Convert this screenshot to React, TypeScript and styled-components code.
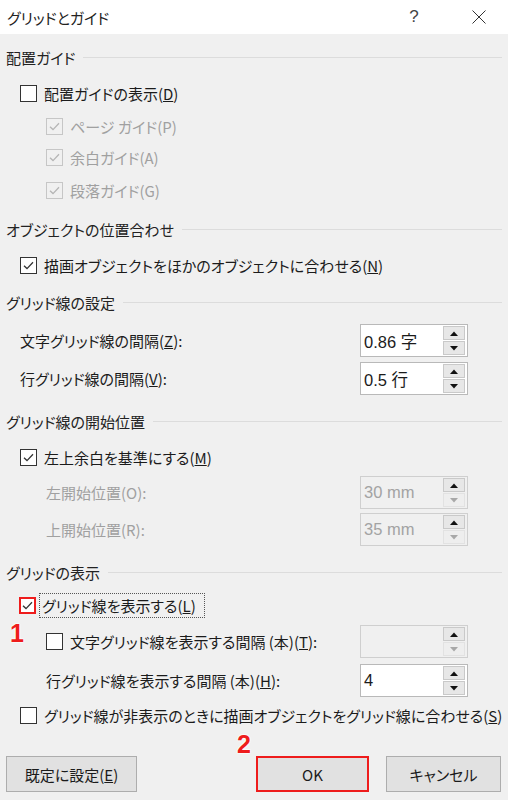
import React from "react"
import styled, { createGlobalStyle } from "styled-components"

const GlobalStyle = createGlobalStyle`
  html, body {
    margin: 0;
    padding: 0;
    background: #f0f0f0;
  }
  body {
    font-family: "Noto Sans CJK JP", "Noto Sans", sans-serif;
    font-feature-settings: "palt";
    color: #1b1b1b;
  }
`

const Dialog = styled.div`
  width: 508px;
  height: 800px;
  background: #f0f0f0;
  display: flex;
  flex-direction: column;
  position: relative;
  overflow: hidden;
`

const TitleBar = styled.div`
  height: 34px;
  background: #fff;
  display: flex;
  align-items: center;
  padding-left: 7px;
  font-size: 15px;
  color: #222;
`

const Title = styled.div`
  flex: 1;
`

const TitleBtn = styled.div<{ $w: number }>`
  width: ${p => p.$w}px;
  height: 34px;
  display: flex;
  align-items: center;
  justify-content: center;
  color: #444;
  font-size: 17px;
  font-family: "Liberation Sans", sans-serif;
`

const Row = styled.div<{ $h: number; $mt: number; $indent?: number }>`
  height: ${p => p.$h}px;
  margin-top: ${p => p.$mt}px;
  padding-left: ${p => p.$indent ?? 0}px;
  display: flex;
  align-items: center;
  font-size: 15px;
  white-space: nowrap;
`

const Header = styled(Row)`
  padding-left: 6px;
  padding-right: 6px;
  gap: 8px;
  color: #222;

  &::after {
    content: "";
    flex: 1;
    height: 1px;
    background: #dcdcdc;
  }
`

const Box = styled.span<{ $disabled?: boolean; $red?: boolean }>`
  width: 17px;
  height: 17px;
  box-sizing: border-box;
  flex: none;
  border: ${p => (p.$red ? "2px solid #ee1c1c" : `1px solid ${p.$disabled ? "#c6c6c6" : "#333"}`)};
  background: ${p => (p.$disabled ? "#f0f0f0" : "#fff")};
  display: flex;
  align-items: center;
  justify-content: center;
  margin-right: 7px;
`

const Label = styled.span<{ $disabled?: boolean }>`
  color: ${p => (p.$disabled ? "#a0a0a0" : "#1b1b1b")};
  flex: 1;
`

const Focus = styled.span`
  outline: 1px dotted #555;
  padding: 1px 8px 1px 2px;
  margin-left: -3px;
`

const Check = ({ checked, disabled, red }: { checked?: boolean; disabled?: boolean; red?: boolean }) => (
  <Box $disabled={disabled} $red={red}>
    {checked && (
      <svg width="13" height="13" viewBox="0 0 13 13">
        <path d="M2 6.8 L5 9.6 L11 3.2" fill="none" stroke={disabled ? "#b5b5b5" : "#333"} strokeWidth="1.3" />
      </svg>
    )}
  </Box>
)

const Spin = styled.div<{ $disabled?: boolean }>`
  width: 108px;
  height: 33px;
  box-sizing: border-box;
  border: 1px solid ${p => (p.$disabled ? "#cfcfcf" : "#b9b9b9")};
  background: ${p => (p.$disabled ? "#f0f0f0" : "#fff")};
  margin-right: 40px;
  display: flex;
  align-items: center;
  padding: 1px 2px 1px 3px;
`

const SpinValue = styled.span<{ $disabled?: boolean }>`
  flex: 1;
  font-family: "Liberation Sans", "Noto Sans CJK JP", sans-serif;
  font-size: 16.5px;
  color: ${p => (p.$disabled ? "#a3a3a3" : "#1b1b1b")};
`

const Arrows = styled.div`
  width: 22px;
  height: 29px;
  display: flex;
  flex-direction: column;
  gap: 1px;
`

const ArrowBtn = styled.div<{ $disabled?: boolean }>`
  flex: 1;
  box-sizing: border-box;
  border: 1px solid ${p => (p.$disabled ? "#e2e2e2" : "#c9c9c9")};
  background: ${p => (p.$disabled ? "#eeeeee" : "#e7e7e7")};
  display: flex;
  align-items: center;
  justify-content: center;
`

const Tri = ({ up, color }: { up?: boolean; color: string }) => (
  <svg width="8" height="5" viewBox="0 0 8 5">
    <path d={up ? "M0 5 L4 0.5 L8 5 Z" : "M0 0 L8 0 L4 4.5 Z"} fill={color} />
  </svg>
)

const SpinBox = ({ value, disabled }: { value: string; disabled?: boolean }) => (
  <Spin $disabled={disabled}>
    <SpinValue $disabled={disabled}>{value}</SpinValue>
    <Arrows>
      <ArrowBtn>
        <Tri up color="#111" />
      </ArrowBtn>
      <ArrowBtn $disabled={disabled}>
        <Tri color={disabled ? "#a8a8a8" : "#111"} />
      </ArrowBtn>
    </Arrows>
  </Spin>
)

const ButtonRow = styled.div`
  margin-top: 29px;
  height: 36px;
  display: flex;
  gap: 17px;
  padding: 0 7px 0 6px;
`

const Button = styled.div<{ $w: number; $red?: boolean }>`
  width: ${p => p.$w}px;
  height: 36px;
  box-sizing: border-box;
  border: ${p => (p.$red ? "2px solid #ee1c1c" : "1px solid #adadad")};
  background: #e1e1e1;
  display: flex;
  align-items: center;
  justify-content: center;
  font-size: 15px;
  color: #1b1b1b;
`

const Spacer = styled.div`
  flex: 1;
`

const Marker = styled.div<{ $x: number; $y: number }>`
  position: absolute;
  left: ${p => p.$x}px;
  top: ${p => p.$y}px;
  font-family: "Liberation Sans", sans-serif;
  font-weight: bold;
  font-size: 25px;
  line-height: 1;
  color: #ee1c1c;
  text-shadow: 0 0 2px #fff, 0 0 2px #fff, 0 0 2px #fff;
`

export default function App() {
  return (
    <Dialog>
      <GlobalStyle />
      <TitleBar>
        <Title>グリッドとガイド</Title>
        <TitleBtn $w={44}>?</TitleBtn>
        <TitleBtn $w={58} style={{ marginLeft: 14 }}>
          <svg width="16" height="16" viewBox="0 0 16 16">
            <path d="M1.5 1.5 L14.5 14.5 M14.5 1.5 L1.5 14.5" stroke="#333" strokeWidth="1" />
          </svg>
        </TitleBtn>
      </TitleBar>

      <Header $h={22} $mt={12}>配置ガイド</Header>
      <Row $h={24} $mt={13} $indent={20}>
        <Check />
        <Label>配置ガイドの表示(<u>D</u>)</Label>
      </Row>
      <Row $h={24} $mt={9} $indent={46}>
        <Check checked disabled />
        <Label $disabled>ページ ガイド(P)</Label>
      </Row>
      <Row $h={24} $mt={7} $indent={46}>
        <Check checked disabled />
        <Label $disabled>余白ガイド(A)</Label>
      </Row>
      <Row $h={24} $mt={9} $indent={46}>
        <Check checked disabled />
        <Label $disabled>段落ガイド(G)</Label>
      </Row>

      <Header $h={22} $mt={16}>オブジェクトの位置合わせ</Header>
      <Row $h={24} $mt={13} $indent={20}>
        <Check checked />
        <Label>描画オブジェクトをほかのオブジェクトに合わせる(<u>N</u>)</Label>
      </Row>

      <Header $h={22} $mt={14}>グリッド線の設定</Header>
      <Row $h={33} $mt={11} $indent={20}>
        <Label>文字グリッド線の間隔(<u>Z</u>):</Label>
        <SpinBox value="0.86 字" />
      </Row>
      <Row $h={33} $mt={5} $indent={20}>
        <Label>行グリッド線の間隔(<u>V</u>):</Label>
        <SpinBox value="0.5 行" />
      </Row>

      <Header $h={22} $mt={15}>グリッド線の開始位置</Header>
      <Row $h={24} $mt={13} $indent={20}>
        <Check checked />
        <Label>左上余白を基準にする(<u>M</u>)</Label>
      </Row>
      <Row $h={33} $mt={7} $indent={46}>
        <Label $disabled>左開始位置(O):</Label>
        <SpinBox value="30 mm" disabled />
      </Row>
      <Row $h={33} $mt={4} $indent={46}>
        <Label $disabled>上開始位置(R):</Label>
        <SpinBox value="35 mm" disabled />
      </Row>

      <Header $h={22} $mt={15}>グリッドの表示</Header>
      <Row $h={24} $mt={10} $indent={19}>
        <Check checked red />
        <Label>
          <Focus>グリッド線を表示する(<u>L</u>)</Focus>
        </Label>
      </Row>
      <Row $h={33} $mt={8} $indent={46}>
        <Check />
        <Label>文字グリッド線を表示する間隔 (本)(<u>T</u>):</Label>
        <SpinBox value="" disabled />
      </Row>
      <Row $h={33} $mt={6} $indent={46}>
        <Label>行グリッド線を表示する間隔 (本)(<u>H</u>):</Label>
        <SpinBox value="4" />
      </Row>
      <Row $h={24} $mt={6} $indent={20}>
        <Check />
        <Label>グリッド線が非表示のときに描画オブジェクトをグリッド線に合わせる(<u>S</u>)</Label>
      </Row>

      <ButtonRow>
        <Button $w={131}>既定に設定(<u>E</u>)</Button>
        <Spacer />
        <Button $w={113} $red>OK</Button>
        <Button $w={115}>キャンセル</Button>
      </ButtonRow>

      <Marker $x={10} $y={621}>1</Marker>
      <Marker $x={237} $y={732}>2</Marker>
    </Dialog>
  )
}
